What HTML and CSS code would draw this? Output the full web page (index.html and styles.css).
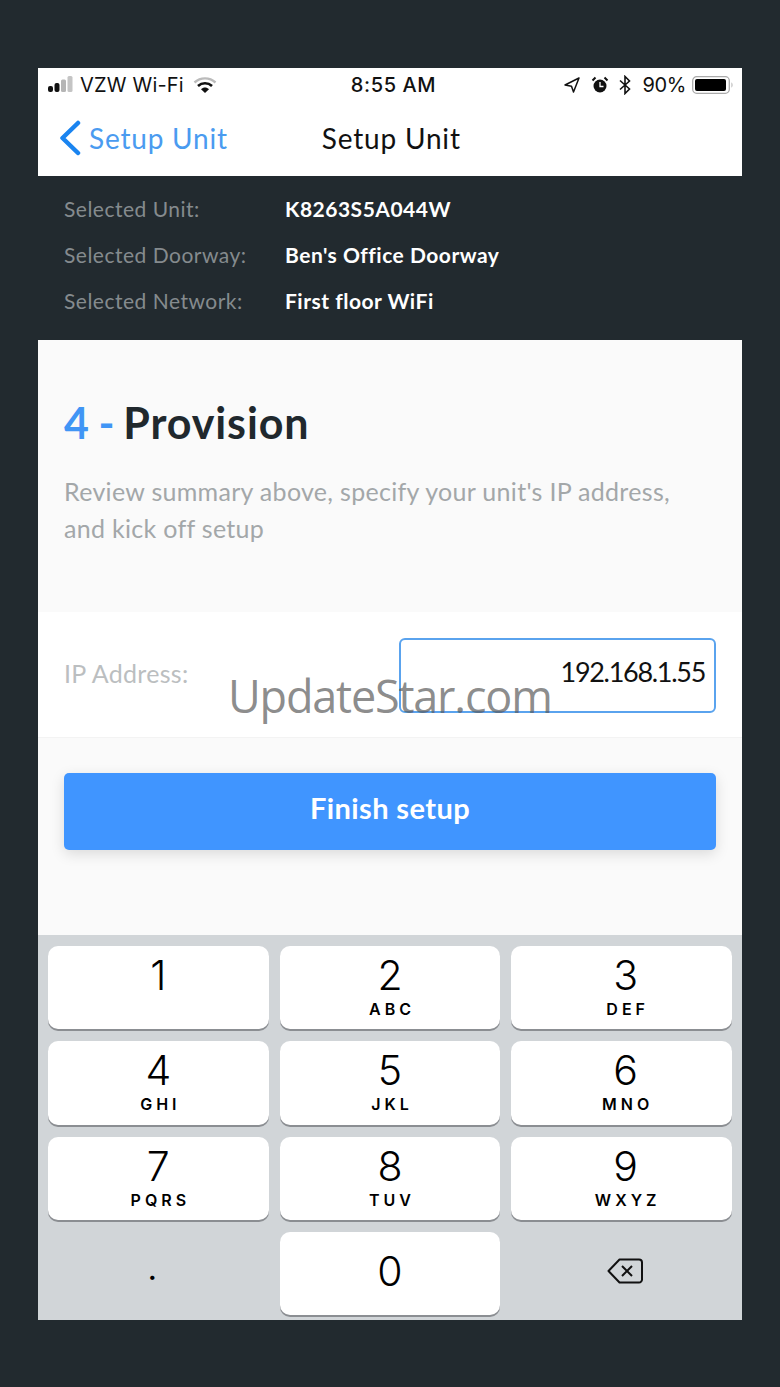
FILE: index.html
```html
<!DOCTYPE html>
<html lang="en">
<head>
    <meta charset="UTF-8">
    <meta name="viewport" content="width=device-width, initial-scale=1.0">
    <title>Setup Unit</title>
    <link rel="stylesheet" href="styles.css">
</head>
<body>
    <div class="phone">
        <div class="header">
            <div class="status">
                <div class="status-left">
                    <svg class="signal" width="28" height="18" viewBox="0 0 28 18">
                        <rect x="0" y="10" width="5" height="6" rx="2" fill="#111"/>
                        <rect x="6.500" y="7" width="5" height="9" rx="2" fill="#111"/>
                        <rect x="13" y="3.500" width="5" height="12.500" rx="1.500" fill="#b5b5b5"/>
                        <rect x="19.500" y="0" width="5" height="16" rx="1.500" fill="#c4c4c4"/>
                    </svg>
                    <span>VZW Wi-Fi</span>
                    <svg class="wifi" width="24" height="18" viewBox="0 0 24 18">
                        <path d="M1.500 6.500C7.500 1 16.500 1 22.500 6.500" fill="none" stroke="#bbb" stroke-width="2.400"/>
                        <path d="M5 10C9 6.300 15 6.300 19 10" fill="none" stroke="#111" stroke-width="2.600"/>
                        <path d="M8 13.300C10.500 11 13.500 11 16 13.300L12 17Z" fill="#111"/>
                    </svg>
                </div>
                <div class="status-time">8:55 AM</div>
                <div class="status-right">
                    <svg width="18" height="18" viewBox="0 0 18 18"><path d="M16 2L2 9l6.500 1.200L10.500 16Z" fill="none" stroke="#111" stroke-width="1.500" stroke-linejoin="round"/></svg>
                    <svg width="18" height="18" viewBox="0 0 18 18">
                        <circle cx="9" cy="10" r="6.500" fill="#111"/>
                        <path d="M9 6v4.500h3.500" fill="none" stroke="#fff" stroke-width="1.300"/>
                        <path d="M1.500 4.500L4.500 1.500M16.500 4.500L13.500 1.500" stroke="#111" stroke-width="2"/>
                    </svg>
                    <svg width="12" height="20" viewBox="0 0 12 20"><path d="M1 5.500L10.500 14 6 18.500V1.500L10.500 6 1 14.500" fill="none" stroke="#111" stroke-width="1.600"/></svg>
                    <span class="battery-pct">90%</span>
                    <svg width="42" height="20" viewBox="0 0 42 20">
                        <rect x="0.700" y="1.700" width="36.600" height="16.600" rx="4" fill="none" stroke="#aaa" stroke-width="1.300"/>
                        <rect x="3" y="4" width="31" height="12" rx="2" fill="#000"/>
                        <path d="M39.500 7.500c1.300.4 1.300 4.600 0 5z" fill="#aaa"/>
                    </svg>
                </div>
            </div>
            <div class="nav">
                <div class="back">
                    <svg width="24" height="36" viewBox="0 0 24 36"><path d="M20 3L4.500 18 20 33" fill="none" stroke="#1a84f0" stroke-width="4.500" stroke-linecap="round" stroke-linejoin="round"/></svg>
                    <span>Setup Unit</span>
                </div>
                <div class="nav-title">Setup Unit</div>
            </div>
        </div>

        <div class="summary">
            <div class="summary-row"><span class="summary-label">Selected Unit:</span><span class="summary-value">K8263S5A044W</span></div>
            <div class="summary-row"><span class="summary-label">Selected Doorway:</span><span class="summary-value">Ben's Office Doorway</span></div>
            <div class="summary-row"><span class="summary-label">Selected Network:</span><span class="summary-value">First floor WiFi</span></div>
        </div>

        <div class="intro">
            <h1><span class="step">4 -</span> Provision</h1>
            <p>Review summary above, specify your unit's IP address, and kick off setup</p>
        </div>

        <div class="ip-row">
            <span class="ip-label">IP Address:</span>
            <div class="ip-input">192.168.1.55</div>
        </div>

        <div class="action">
            <button class="finish">Finish setup</button>
        </div>

        <div class="keyboard">
            <div class="key"><span class="num">1</span></div>
            <div class="key"><span class="num">2</span><span class="letters">ABC</span></div>
            <div class="key"><span class="num">3</span><span class="letters">DEF</span></div>
            <div class="key"><span class="num">4</span><span class="letters">GHI</span></div>
            <div class="key"><span class="num">5</span><span class="letters">JKL</span></div>
            <div class="key"><span class="num">6</span><span class="letters">MNO</span></div>
            <div class="key"><span class="num">7</span><span class="letters">PQRS</span></div>
            <div class="key"><span class="num">8</span><span class="letters">TUV</span></div>
            <div class="key"><span class="num">9</span><span class="letters">WXYZ</span></div>
            <div class="key key-blank"><span class="dot">.</span></div>
            <div class="key key-zero"><span class="num">0</span></div>
            <div class="key key-blank">
                <svg width="40" height="30" viewBox="0 0 40 30">
                    <path d="M13.500 3.500H33a3 3 0 0 1 3 3v17a3 3 0 0 1-3 3H13.500L2.500 15Z" fill="none" stroke="#111" stroke-width="2" stroke-linejoin="round"/>
                    <path d="M16 10l10 10M26 10L16 20" stroke="#111" stroke-width="2"/>
                </svg>
            </div>
        </div>

        <div class="watermark">UpdateStar.com</div>
    </div>
</body>
</html>
```

FILE: styles.css
```css
html, body {
    margin: 0;
    padding: 0;
}
body {
    width: 780px;
    height: 1387px;
    background-color: #222a2f;
    font-family: 'Lato', sans-serif;
    overflow: hidden;
}
.phone {
    position: relative;
    width: 704px;
    height: 1252px;
    margin: 68px 38px 0;
    display: flex;
    flex-direction: column;
}

/* Status bar and nav */
.header {
    height: 108px;
    background-color: #fff;
    flex-shrink: 0;
}
.status {
    height: 34px;
    padding: 0 8px 0 10px;
    display: flex;
    align-items: center;
    justify-content: space-between;
    font-family: 'Inter', sans-serif;
    font-size: 20px;
    color: #111;
}
.status-left, .status-right {
    width: 230px;
    display: flex;
    align-items: center;
}
.status-left span {
    margin-left: 4px;
    letter-spacing: 0.2px;
}
.wifi {
    margin-left: 9px;
}
.status-time {
    margin-left: 5px;
    font-weight: 500;
    letter-spacing: 0.6px;
}
.status-right {
    justify-content: flex-end;
    gap: 10px;
}
.battery-pct {
    margin-left: 2px;
    margin-right: -4px;
    letter-spacing: -0.4px;
}
.nav {
    position: relative;
    height: 74px;
    padding-bottom: 2px;
    box-sizing: border-box;
    display: flex;
    align-items: center;
    padding-left: 20px;
}
.back {
    display: flex;
    align-items: center;
    color: #4a9bf0;
    font-size: 28px;
    gap: 7px;
    letter-spacing: 0.8px;
}
.nav-title {
    margin-left: 94px;
    font-size: 28px;
    color: #111;
    letter-spacing: 0.8px;
}

/* Summary on dark background */
.summary {
    height: 164px;
    flex-shrink: 0;
    padding: 9px 26px 0;
    box-sizing: border-box;
}
.summary-row {
    height: 46px;
    display: flex;
    align-items: center;
    font-size: 21px;
}
.summary-label {
    width: 221px;
    color: #858b8e;
    letter-spacing: 0.5px;
}
.summary-value {
    color: #fff;
    font-weight: 700;
    letter-spacing: 0.5px;
}

.intro {
    height: 272px;
    flex-shrink: 0;
    background-color: #fafafa;
    padding: 57px 26px 0;
    box-sizing: border-box;
}
.intro h1 {
    margin: 0;
    font-size: 43px;
    line-height: 52px;
    font-weight: 700;
    color: #20282d;
    letter-spacing: 0.9px;
}
.step {
    color: #4095f5;
    letter-spacing: -0.5px;
    margin-right: -2px;
}
.intro p {
    margin: 24px 0 0;
    width: 640px;
    font-size: 25px;
    line-height: 37px;
    color: #a3a7a9;
    letter-spacing: 0.3px;
}

.ip-row {
    height: 126px;
    flex-shrink: 0;
    background-color: #fff;
    border-bottom: 1px solid #f3f3f3;
    padding: 1px 26px 0;
    box-sizing: border-box;
    display: flex;
    align-items: center;
    justify-content: space-between;
}
.ip-label {
    font-size: 25px;
    color: #bbbec0;
    letter-spacing: 0.3px;
    margin-top: -4px;
}
.ip-input {
    width: 317px;
    height: 75px;
    box-sizing: border-box;
    border: 2px solid #5aa3ee;
    border-radius: 6px;
    padding: 0 9px 7px 0;
    display: flex;
    align-items: center;
    justify-content: flex-end;
    font-size: 27px;
    letter-spacing: -1.3px;
    color: #111;
}

.action {
    flex: 1;
    background-color: #fafafa;
    padding: 35px 26px 0;
}
.finish {
    display: block;
    width: 100%;
    height: 77px;
    padding: 0 0 8px;
    border: none;
    border-radius: 5px;
    background-color: #4095ff;
    color: #fff;
    font-family: 'Lato', sans-serif;
    font-size: 29px;
    font-weight: 700;
    letter-spacing: 0.4px;
    box-shadow: 0 4px 14px rgba(0, 0, 0, 0.13);
}

/* Number pad */
.keyboard {
    height: 385px;
    flex-shrink: 0;
    background-color: #d1d5d8;
    padding: 11px 10px 5px;
    box-sizing: border-box;
    display: grid;
    grid-template-columns: repeat(3, 1fr);
    grid-template-rows: repeat(4, 1fr);
    column-gap: 11px;
    row-gap: 12px;
}
.key {
    background-color: #fff;
    border-radius: 10px;
    box-shadow: 0 2px 0 #8b8e92;
    display: flex;
    flex-direction: column;
    align-items: center;
    padding-top: 5px;
    color: #000;
}
.key:nth-child(3n) {
    padding-left: 8px;
}
.num {
    font-family: 'Inter', sans-serif;
    font-size: 41px;
    line-height: 48px;
    font-weight: 300;
}
.letters {
    font-family: 'Inter', sans-serif;
    font-size: 16px;
    line-height: 16px;
    font-weight: 600;
    letter-spacing: 4px;
    margin: 2px -4px 0 0;
}
.key-blank {
    background: none;
    box-shadow: none;
    padding-top: 0;
    justify-content: center;
}
.key-zero {
    justify-content: flex-start;
    padding-top: 15px;
}
.dot {
    font-family: 'Inter', sans-serif;
    font-size: 30px;
    font-weight: 500;
    margin: -8px 12px 0 0;
}
.key-blank svg {
    margin-top: -4px;
}

.watermark {
    position: absolute;
    left: 190px;
    top: 596px;
    font-family: 'Open Sans', sans-serif;
    font-size: 45px;
    line-height: 64px;
    letter-spacing: -1.2px;
    color: rgba(90, 90, 90, 0.7);
    white-space: nowrap;
}
```
